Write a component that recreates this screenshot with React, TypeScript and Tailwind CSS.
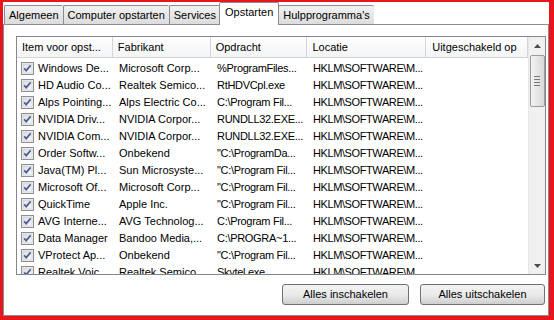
import React from "react";

const rows: [string, string, string, string][] = [
  ["Windows De...", "Microsoft Corp...", "%ProgramFiles...", "HKLM\\SOFTWARE\\M..."],
  ["HD Audio Co...", "Realtek Semico...", "RtHDVCpl.exe", "HKLM\\SOFTWARE\\M..."],
  ["Alps Pointing...", "Alps Electric Co...", "C:\\Program Fil...", "HKLM\\SOFTWARE\\M..."],
  ["NVIDIA Driv...", "NVIDIA Corpor...", "RUNDLL32.EXE...", "HKLM\\SOFTWARE\\M..."],
  ["NVIDIA Com...", "NVIDIA Corpor...", "RUNDLL32.EXE...", "HKLM\\SOFTWARE\\M..."],
  ["Order Softw...", "Onbekend", "\"C:\\ProgramDa...", "HKLM\\SOFTWARE\\M..."],
  ["Java(TM) Pl...", "Sun Microsyste...", "\"C:\\Program Fil...", "HKLM\\SOFTWARE\\M..."],
  ["Microsoft Of...", "Microsoft Corp...", "\"C:\\Program Fil...", "HKLM\\SOFTWARE\\M..."],
  ["QuickTime", "Apple Inc.", "\"C:\\Program Fil...", "HKLM\\SOFTWARE\\M..."],
  ["AVG Interne...", "AVG Technolog...", "C:\\Program Fil...", "HKLM\\SOFTWARE\\M..."],
  ["Data Manager", "Bandoo Media,...", "C:\\PROGRA~1...", "HKLM\\SOFTWARE\\M..."],
  ["VProtect Ap...", "Onbekend", "\"C:\\Program Fil...", "HKLM\\SOFTWARE\\M..."],
  ["Realtek Voic...", "Realtek Semico...", "Skytel.exe", "HKLM\\SOFTWARE\\M..."],
];

function Check() {
  return (
    <svg width="13" height="13" viewBox="0 0 13 13" className="shrink-0">
      <defs>
        <linearGradient id="cbg" x1="0" y1="0" x2="1" y2="1">
          <stop offset="0" stopColor="#dcdcdc" />
          <stop offset="1" stopColor="#fbfbfb" />
        </linearGradient>
      </defs>
      <rect x="0.5" y="0.5" width="12" height="12" fill="#f4f4f4" stroke="#8e8f8f" />
      <rect x="2" y="2" width="9" height="9" fill="url(#cbg)" stroke="#c4c6c8" strokeWidth="0.6" />
      <path d="M3.2 6.4 L5.2 8.6 L9.6 3.4" fill="none" stroke="#4a5f97" strokeWidth="1.7" />
    </svg>
  );
}

const tabs = ["Algemeen", "Computer opstarten", "Services", "Opstarten", "Hulpprogramma's"];

export default function App() {
  return (
    <div
      className="w-[554px] h-[320px] bg-[#e8161b] pl-[3px] pt-[2px] pr-[5px] pb-[4px] overflow-hidden"
      style={{ fontFamily: '"Liberation Sans", Arial, sans-serif' }}
    >
      <div className="w-full h-full bg-[#f5f5f5] flex flex-col text-[11px] text-black leading-none whitespace-nowrap">
        {/* tabs */}
        <div className="flex items-end h-[22px] pl-[1px] bg-white">
          {tabs.map((t) =>
            t === "Opstarten" ? (
              <div
                key={t}
                className="h-[23px] -mb-[1px] -mx-[1px] z-10 px-[5px] flex items-start pt-[4px] bg-white border border-b-0 border-[#898c95] rounded-t-[2px]"
              >
                {t}
              </div>
            ) : (
              <div
                key={t}
                className="h-[19px] px-[4px] flex items-center border border-b-0 border-r-0 last:border-r border-[#898c95] bg-gradient-to-b from-[#f2f2f2] to-[#dcdcdc] rounded-t-[2px]"
              >
                {t}
              </div>
            )
          )}
          <div className="flex-1" />
        </div>
        {/* panel */}
        <div className="flex-1 bg-white border border-[#898c95] flex flex-col pt-[11px] pl-[12px] pr-[2px] pb-[8px]">
          <div className="h-[239px] border border-[#828790] flex overflow-hidden">
            <div className="flex-1 flex flex-col overflow-hidden">
              <div className="h-[21px] flex border-b border-[#d5d5d5] bg-gradient-to-b from-white to-[#f3f4f6] shrink-0">
                <div className="w-[96px] pl-[5px] flex items-center border-r border-[#d5d5d5] overflow-hidden">Item voor opst...</div>
                <div className="w-[98px] pl-[5px] flex items-center border-r border-[#d5d5d5] overflow-hidden">Fabrikant</div>
                <div className="w-[97px] pl-[5px] flex items-center border-r border-[#d5d5d5] overflow-hidden">Opdracht</div>
                <div className="w-[119px] pl-[5px] flex items-center border-r border-[#d5d5d5] overflow-hidden">Locatie</div>
                <div className="w-[102px] pl-[6px] flex items-center border-r border-[#d5d5d5] overflow-hidden">Uitgeschakeld op</div>
              </div>
              <div className="flex flex-col pt-[2px]">
                {rows.map((r, i) => (
                  <div key={i} className="h-[17px] flex items-center shrink-0">
                    <div className="w-[96px] pl-[4px] flex items-center gap-[4px] overflow-hidden">
                      <Check />
                      <span>{r[0]}</span>
                    </div>
                    <div className="w-[98px] pl-[6px] overflow-hidden">{r[1]}</div>
                    <div className="w-[97px] pl-[6px] tracking-[-0.3px] overflow-hidden">{r[2]}</div>
                    <div className="w-[119px] pl-[5px] tracking-[-0.4px] overflow-hidden">{r[3]}</div>
                  </div>
                ))}
              </div>
            </div>
            {/* scrollbar */}
            <div className="w-[17px] bg-[#f0f0f0] border-l border-[#e6e6e6] flex flex-col items-center shrink-0">
              <div className="h-[17px] w-full flex items-center justify-center">
                <svg width="7" height="4" viewBox="0 0 7 4">
                  <path d="M0 4 L3.5 0 L7 4 Z" fill="#4d4d4d" />
                </svg>
              </div>
              <div className="w-[15px] h-[52px] mt-[1px] rounded-[2px] border border-[#9b9b9b] bg-gradient-to-r from-[#f3f3f3] to-[#d8d8d8] flex flex-col items-center justify-center gap-[2px]">
                <div className="w-[6px] h-[1px] bg-[#7a7a7a]" />
                <div className="w-[6px] h-[1px] bg-[#7a7a7a]" />
                <div className="w-[6px] h-[1px] bg-[#7a7a7a]" />
                <div className="w-[6px] h-[1px] bg-[#7a7a7a]" />
              </div>
              <div className="flex-1" />
              <div className="h-[17px] w-full flex items-center justify-center">
                <svg width="7" height="4" viewBox="0 0 7 4">
                  <path d="M0 0 L7 0 L3.5 4 Z" fill="#4d4d4d" />
                </svg>
              </div>
            </div>
          </div>
          <div className="flex justify-end gap-[11px] mt-[9px] pr-[1px]">
            <button className="w-[127px] h-[21px] rounded-[3px] border border-[#707070] bg-gradient-to-b from-[#f2f2f2] via-[#ebebeb] to-[#cfcfcf]">
              Alles inschakelen
            </button>
            <button className="w-[125px] h-[21px] rounded-[3px] border border-[#707070] bg-gradient-to-b from-[#f2f2f2] via-[#ebebeb] to-[#cfcfcf]">
              Alles uitschakelen
            </button>
          </div>
        </div>
      </div>
    </div>
  );
}
